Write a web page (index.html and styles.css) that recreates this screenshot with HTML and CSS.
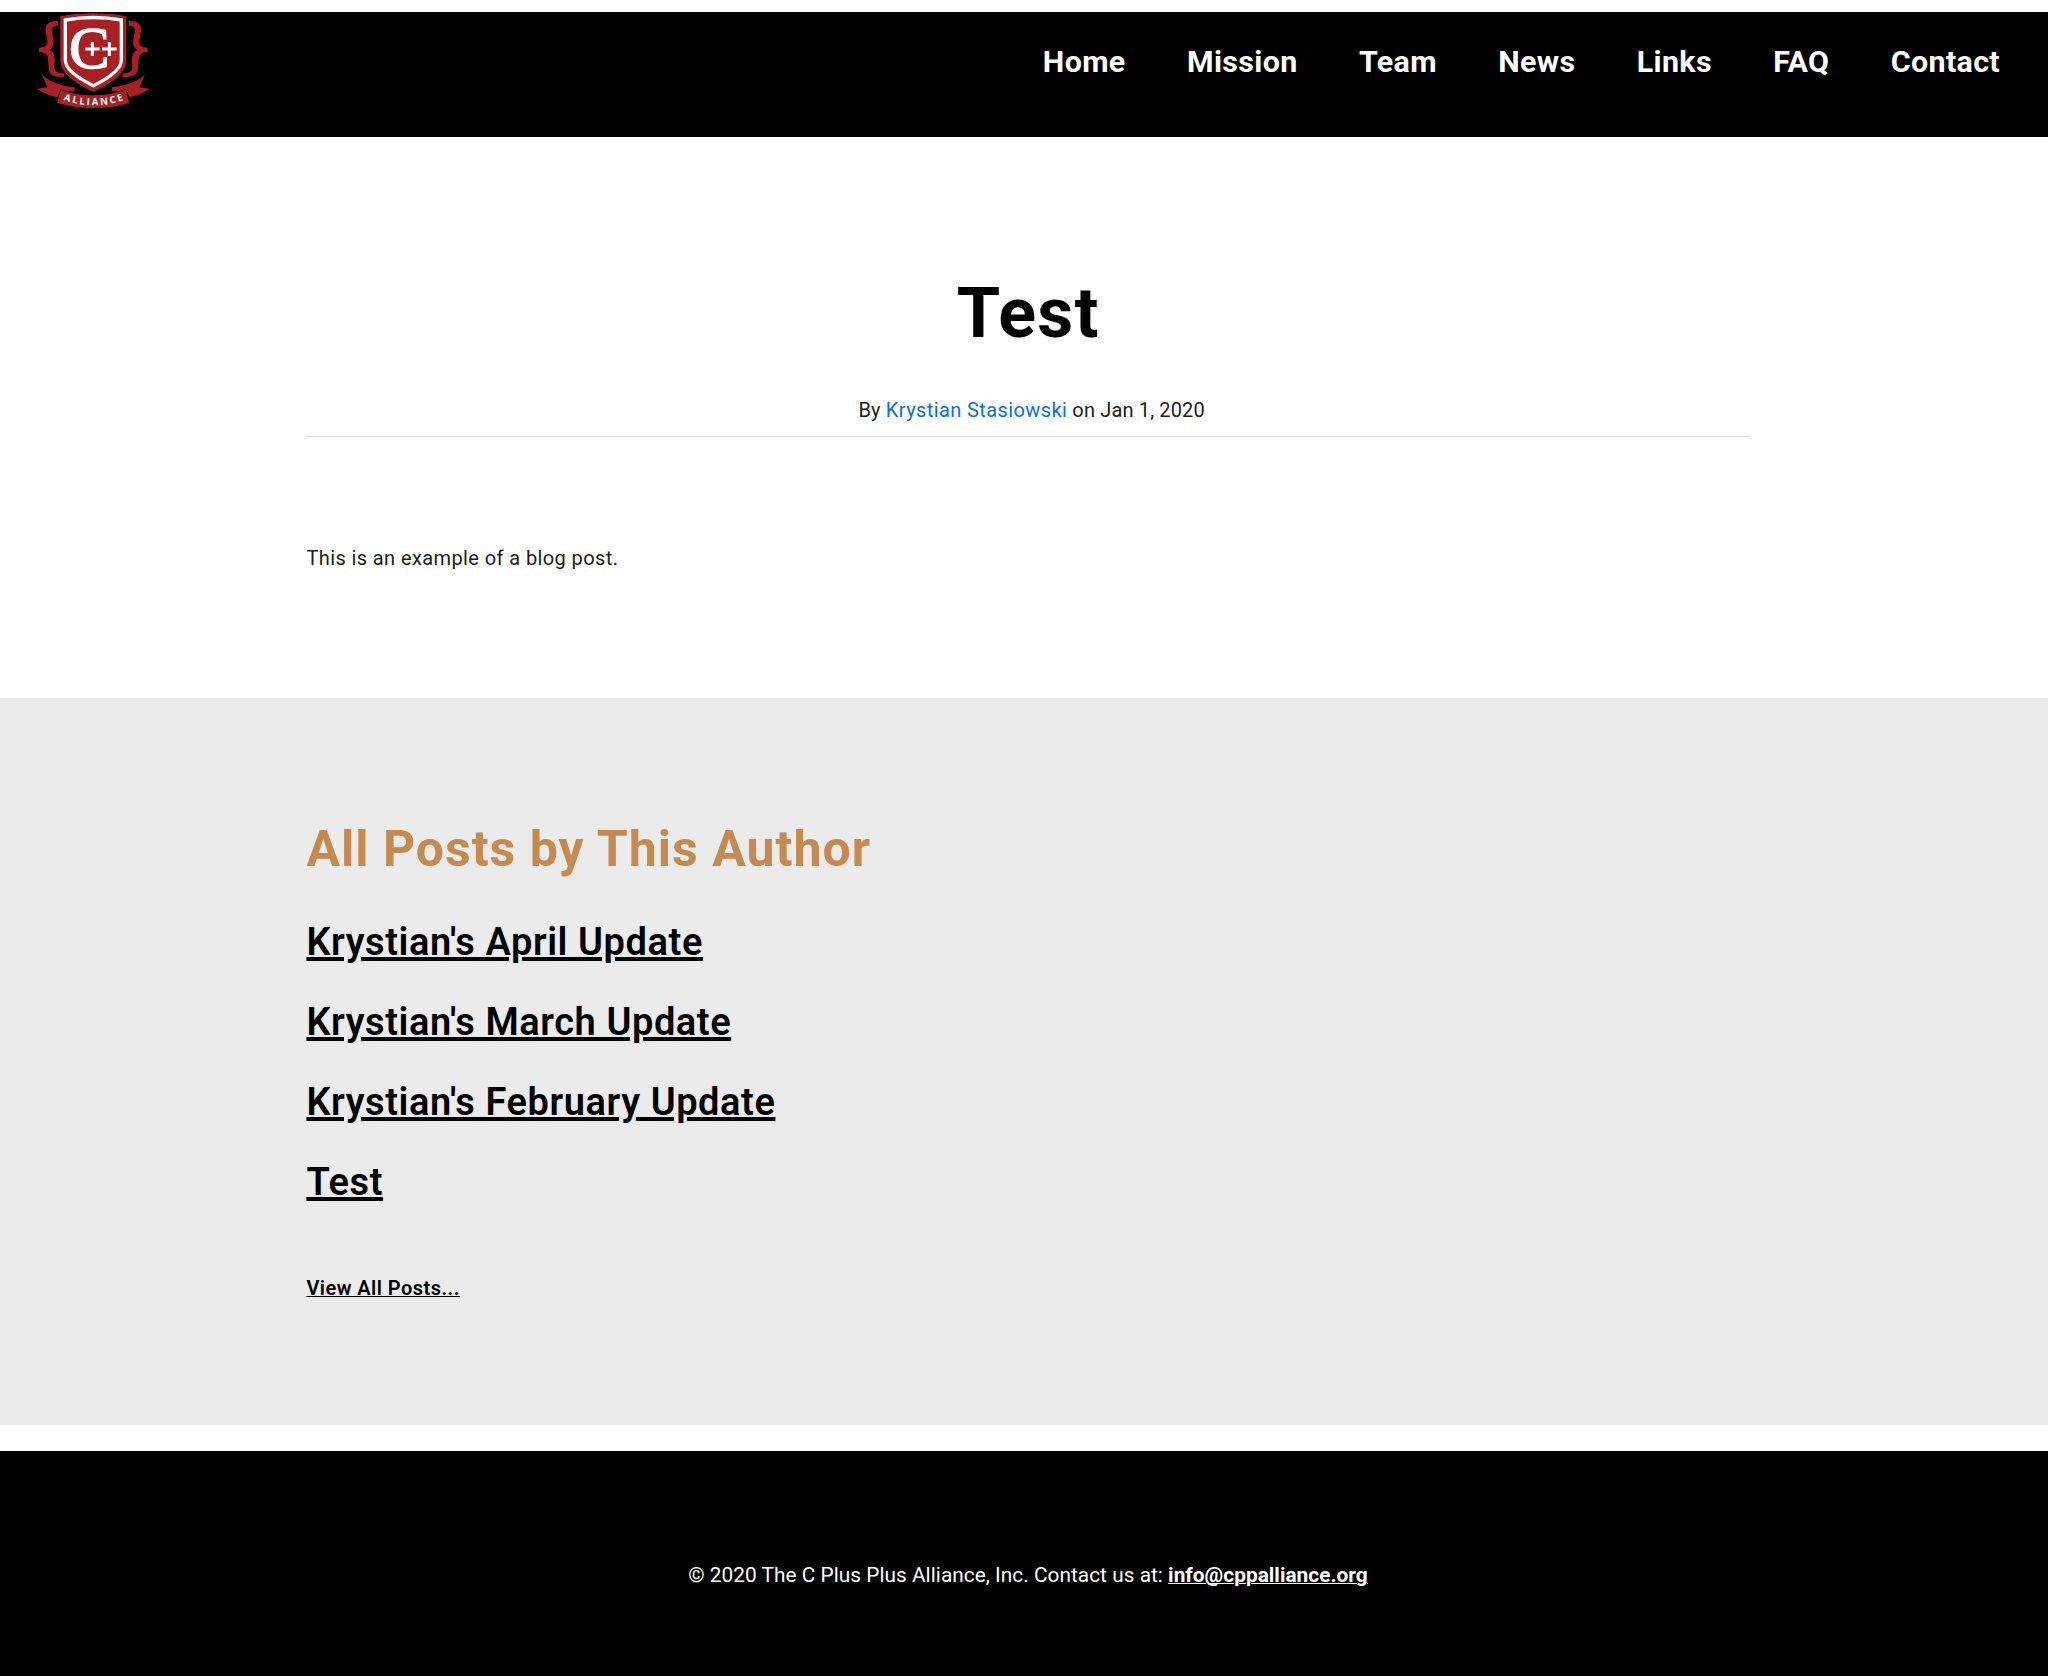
FILE: index.html
```html
<!DOCTYPE html>
<html lang="en">
<head>
<meta charset="utf-8">
<title>Test</title>
<link rel="stylesheet" href="styles.css">
</head>
<body>
<header class="site-header">
  <a class="logo" aria-label="C++ Alliance">
    <svg viewBox="48 36 342 294" width="114" height="98">
      <g fill="#ab1f24">
        <path d="M114 63C88 62 76 72 77 91L82 120C84 137 77 142 57 143V156C76 157 84 163 84 178L86 204C87 224 104 232 132 232V220C112 220 103 214 103 202L104 180C104 164 99 154 87 149C98 144 102 134 100 118L96 96C94 81 99 77 114 77Z"/>
        <path d="M326 63C352 62 364 72 363 91L358 120C356 137 363 142 383 143V156C364 157 356 163 356 178L354 204C353 224 336 232 308 232V220C328 220 337 214 337 202L336 180C336 164 341 154 353 149C342 144 338 134 340 118L344 96C346 81 341 77 326 77Z"/>
        <path d="M65 223C82 242 116 257 164 262V273C145 275 132 273 122 268L111 292C90 287 70 279 51 266L82 262Z"/>
        <path d="M375 223C358 242 324 257 276 262V273C295 275 308 273 318 268L329 292C350 287 370 279 389 266L358 262Z"/>
        <path d="M122 269C180 291 260 291 317 269L328 309C265 330 175 329 112 308Z"/>
        <path d="M119 47C180 35 260 35 321 47V182C321 213 285 247 220 278C155 247 119 213 119 182Z" stroke="#000" stroke-width="4"/>
      </g>
      <path d="M136 60Q220 45 304 60V180C304 207 273 231 220 257C167 231 136 207 136 180Z" fill="none" stroke="#fff" stroke-width="10"/>
      <text class="logo-c" x="147" y="205" textLength="122" lengthAdjust="spacingAndGlyphs">C</text>
      <path d="M194 147H292M217 124V170M268 124V170" fill="none" stroke="#ab1f24" stroke-width="14"/>
      <path d="M196 147H239M246 147H290M217 126V168M268 126V168" fill="none" stroke="#fff" stroke-width="9"/>
      <path id="ribbon" d="M127 299Q220 333 315 299" fill="none"/>
      <text class="logo-name"><textPath href="#ribbon" startOffset="3" textLength="184" lengthAdjust="spacing">ALLIANCE</textPath></text>
    </svg>
  </a>
  <nav class="site-nav">
    <a>Home</a><a>Mission</a><a>Team</a><a>News</a><a>Links</a><a>FAQ</a><a>Contact</a>
  </nav>
</header>
<main>
  <article class="post">
    <h1 class="post-title">Test</h1>
    <p class="post-meta">By <a class="author">Krystian Stasiowski</a> on Jan 1, 2020</p>
    <p class="post-body">This is an example of a blog post.</p>
  </article>
  <section class="author-posts">
    <h2 class="section-title">All Posts by This Author</h2>
    <ul class="post-list">
      <li><a>Krystian's April Update</a></li>
      <li><a>Krystian's March Update</a></li>
      <li><a>Krystian's February Update</a></li>
      <li><a>Test</a></li>
    </ul>
    <p class="view-all"><a>View All Posts...</a></p>
  </section>
</main>
<footer class="site-footer">
  <p>© 2020 The C Plus Plus Alliance, Inc. Contact us at: <a>info@cppalliance.org</a></p>
</footer>
</body>
</html>
```
FILE: styles.css
```css
* { box-sizing: border-box; }
body {
  margin: 0;
  padding-top: 12px;
  min-height: 1676px;
  display: flex;
  flex-direction: column;
  background: #fefefe;
  color: #000;
  font-family: Roboto, "Liberation Sans", sans-serif;
  font-size: 20px;
  line-height: 30px;
}
h1, h2, p, ul { margin: 0; padding: 0; }
.site-header {
  height: 125px;
  background: #000;
  display: flex;
  justify-content: space-between;
  align-items: flex-start;
  padding: 0 48px 0 36px;
}
.logo svg { display: block; }
.logo-c { font: 178px "Liberation Serif", serif; fill: #fff; stroke: #fff; stroke-width: 4px; }
.logo-name { font: bold 29px "Open Sans", "Liberation Sans", sans-serif; fill: #fff; }
.site-nav {
  display: flex;
  gap: 61.4px;
  padding-top: 30px;
  color: #fff;
  font-size: 30.4px;
  font-weight: 700;
  line-height: 40px;
  letter-spacing: 0.35px;
}
.post { padding: 134px 298px 125px 306.4px; }
.post-title {
  font-size: 70px;
  line-height: 84px;
  font-weight: 700;
  letter-spacing: 1.3px;
  text-align: center;
}
.post-meta {
  margin-top: 40px;
  padding: 0 0 11px 7px;
  border-bottom: 1px solid #dedede;
  text-align: center;
  letter-spacing: 0.15px;
  color: #212121;
}
.author { color: #0b6fde; letter-spacing: 0.4px; }
.post-body { margin-top: 106px; letter-spacing: 0.4px; color: #1c1c1c; }
.author-posts { background: #ebebeb; padding: 121px 298px 122px 306.4px; }
.section-title {
  font-size: 50px;
  line-height: 60px;
  font-weight: 700;
  letter-spacing: 1px;
  color: #c68a50;
}
.post-list {
  list-style: none;
  margin-top: 23px;
  font-size: 38px;
  line-height: 80px;
  font-weight: 600;
  letter-spacing: 0.58px;
}
.post-list a, .view-all a, .site-footer a { text-decoration: underline; }
.post-list a { text-decoration-thickness: 4px; }
.view-all { margin-top: 51px; font-weight: 600; letter-spacing: 0.45px; }
.view-all a { text-decoration-thickness: 1px; }
.site-footer {
  flex: 1;
  margin-top: 26px;
  padding: 109px 0 0 8px;
  background: #000;
  color: #fff;
  font-size: 20.8px;
  letter-spacing: 0.04px;
  text-align: center;
}
.site-footer a { font-weight: 700; text-decoration-thickness: 1px; }
```
